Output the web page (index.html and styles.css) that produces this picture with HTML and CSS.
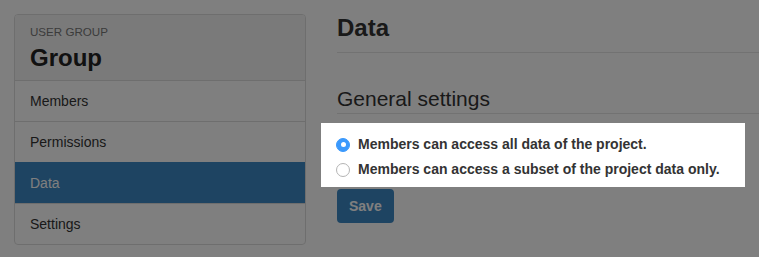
FILE: index.html
```html
<!DOCTYPE html>
<html lang="en">
<head>
<meta charset="utf-8">
<title>Group – Data</title>
<link rel="stylesheet" href="styles.css">
</head>
<body>
<div class="page">
  <aside class="panel">
    <div class="panel-head">
      <div class="panel-label">USER GROUP</div>
      <div class="panel-title">Group</div>
    </div>
    <nav class="menu">
      <a class="menu-item">Members</a>
      <a class="menu-item">Permissions</a>
      <a class="menu-item active">Data</a>
      <a class="menu-item">Settings</a>
    </nav>
  </aside>
  <main class="content">
    <h1 class="page-title">Data</h1>
    <h2 class="section-title">General settings</h2>
    <div class="choice-box">
      <label class="choice"><span class="radio checked"></span>Members can access all data of the project.</label>
      <label class="choice"><span class="radio"></span>Members can access a subset of the project data only.</label>
    </div>
    <button class="btn-save">Save</button>
  </main>
</div>
<div class="overlay"></div>
</body>
</html>
```

FILE: styles.css
```css
html, body {
  margin: 0;
  padding: 0;
  background: #ffffff;
  font-family: "Liberation Sans", Arial, sans-serif;
  color: #333333;
}

.page {
  display: flex;
  align-items: flex-start;
  gap: 31px;
  padding: 14px 0 0 14px;
}

.panel {
  width: 290px;
  flex: none;
  border: 1px solid #dddddd;
  border-radius: 4px;
  overflow: hidden;
}

.panel-head {
  background: #f5f5f5;
  border-bottom: 1px solid #dddddd;
  padding: 9px 15px 7px;
}

.panel-label {
  font-size: 11.6px;
  line-height: 16px;
  color: #777777;
}

.panel-title {
  margin-top: 3px;
  font-size: 24px;
  line-height: 30px;
  font-weight: bold;
  color: #222222;
}

.menu {
  display: flex;
  flex-direction: column;
}

.menu-item {
  display: block;
  padding: 10px 15px;
  font-size: 14px;
  line-height: 20px;
  color: #333333;
  border-top: 1px solid #dddddd;
}

.menu-item:first-child {
  border-top: none;
}

.menu-item.active {
  background: #3c88c4;
  border-top-color: #3c88c4;
  color: #ffffff;
}

.content {
  flex: 1;
  min-width: 0;
}

.page-title {
  margin: 0;
  padding-bottom: 10px;
  border-bottom: 1px solid #e5e5e5;
  font-size: 24px;
  line-height: 28px;
  font-weight: bold;
  color: #333333;
}

.section-title {
  margin: 34px 0 0;
  padding-bottom: 2px;
  border-bottom: 1px solid #e5e5e5;
  font-size: 21px;
  line-height: 24px;
  font-weight: normal;
  color: #333333;
}

.choice-box {
  position: relative;
  z-index: 2;
  background: #ffffff;
  margin: 9px 14px 0 -16px;
  padding: 9px 15px 5px;
}

.choice {
  display: flex;
  align-items: center;
  gap: 8px;
  font-size: 14px;
  line-height: 25px;
  font-weight: bold;
  color: #333333;
}

.radio {
  width: 14px;
  height: 14px;
  box-sizing: border-box;
  border-radius: 50%;
  border: 1px solid #b4b4b4;
  background: #ffffff;
  flex: none;
  display: flex;
  align-items: center;
  justify-content: center;
}

.radio.checked {
  border-color: #3b99fc;
  background: #3b99fc;
}

.radio.checked::after {
  content: "";
  width: 5px;
  height: 5px;
  border-radius: 50%;
  background: #ffffff;
}

.btn-save {
  margin-top: 2px;
  display: block;
  padding: 7px 12px;
  border: none;
  border-radius: 4px;
  background: #3c88c4;
  color: #ffffff;
  font-family: inherit;
  font-size: 14px;
  line-height: 20px;
  font-weight: bold;
}

.overlay {
  position: fixed;
  inset: 0;
  z-index: 1;
  background: rgba(0, 0, 0, 0.5);
}
```
